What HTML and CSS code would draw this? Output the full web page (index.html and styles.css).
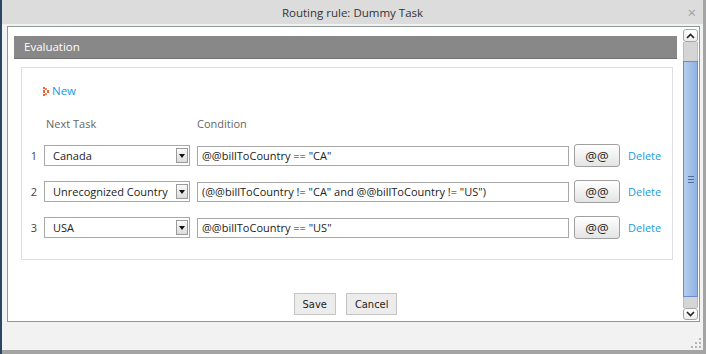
FILE: index.html
```html
<!DOCTYPE html>
<html lang="en">
<head>
    <meta charset="UTF-8">
    <title>Routing rule: Dummy Task</title>
    <link rel="stylesheet" href="styles.css">
</head>
<body>
    <div class="window">
        <div class="titlebar">
            <span></span>
            <span class="title">Routing rule: Dummy Task</span>
            <span class="close">&times;</span>
        </div>

        <div class="frame">
            <div class="content">
                <div class="section-head">Evaluation</div>

                <div class="panel">
                    <a class="new-link" href="#">
                        <svg width="6" height="9" viewBox="0 0 6 9">
                            <rect x="0" y="0" width="2" height="2" fill="#e8643c"/>
                            <rect x="0" y="3" width="2" height="3" fill="#e8643c"/>
                            <rect x="0" y="7" width="2" height="2" fill="#e8643c"/>
                            <rect x="2" y="1" width="2" height="2" fill="#f08a5a"/>
                            <rect x="2" y="6" width="2" height="2" fill="#f08a5a"/>
                            <rect x="4" y="3" width="2" height="3" fill="#e8643c"/>
                        </svg>
                        New
                    </a>

                    <div class="row head">
                        <span class="num"></span>
                        <span class="col-task">Next Task</span>
                        <span class="col-cond">Condition</span>
                    </div>

                    <div class="row">
                        <span class="num">1</span>
                        <div class="select"><span class="value">Canada</span><span class="arrow"></span></div>
                        <input class="cond" type="text" value='@@billToCountry == "CA"'>
                        <button class="at-btn">@@</button>
                        <a class="delete" href="#">Delete</a>
                    </div>

                    <div class="row">
                        <span class="num">2</span>
                        <div class="select"><span class="value">Unrecognized Country</span><span class="arrow"></span></div>
                        <input class="cond" type="text" value='(@@billToCountry != "CA" and @@billToCountry != "US")'>
                        <button class="at-btn">@@</button>
                        <a class="delete" href="#">Delete</a>
                    </div>

                    <div class="row">
                        <span class="num">3</span>
                        <div class="select"><span class="value">USA</span><span class="arrow"></span></div>
                        <input class="cond" type="text" value='@@billToCountry == "US"'>
                        <button class="at-btn">@@</button>
                        <a class="delete" href="#">Delete</a>
                    </div>
                </div>

                <div class="actions">
                    <button class="plain-btn">Save</button>
                    <button class="plain-btn">Cancel</button>
                </div>
            </div>

            <div class="scrollbar">
                <div class="sb-btn">
                    <svg width="9" height="6" viewBox="0 0 9 6"><path d="M1 5 L4.5 1.5 L8 5" fill="none" stroke="#222" stroke-width="1.6"/></svg>
                </div>
                <div class="sb-track top"></div>
                <div class="sb-thumb"><span class="grip-lines"></span></div>
                <div class="sb-track bottom"></div>
                <div class="sb-btn">
                    <svg width="9" height="6" viewBox="0 0 9 6"><path d="M1 1 L4.5 4.5 L8 1" fill="none" stroke="#222" stroke-width="1.6"/></svg>
                </div>
            </div>
        </div>

        <div class="footer">
            <svg class="resize" width="10" height="10" viewBox="0 0 10 10">
                <rect x="8" y="0" width="2" height="2" fill="#b5b5b5"/>
                <rect x="4" y="4" width="2" height="2" fill="#b5b5b5"/>
                <rect x="8" y="4" width="2" height="2" fill="#b5b5b5"/>
                <rect x="0" y="8" width="2" height="2" fill="#b5b5b5"/>
                <rect x="4" y="8" width="2" height="2" fill="#b5b5b5"/>
                <rect x="8" y="8" width="2" height="2" fill="#b5b5b5"/>
            </svg>
        </div>
    </div>
</body>
</html>
```

FILE: styles.css
```css
html, body {
    margin: 0;
    height: 354px;
    overflow: hidden;
}
body {
    font-family: "Open Sans", "Noto Sans", sans-serif;
    font-size: 11px;
    color: #333;
    background: linear-gradient(to right, #2a4664 0, #2a4664 2px, #a4a4a4 2px);
}
.window {
    width: 701px;
    height: 350px;
    margin-left: 2px;
    background-color: #f2f2f2;
    display: flex;
    flex-direction: column;
}
.titlebar {
    height: 24px;
    background-color: #dcdcdc;
    display: grid;
    grid-template-columns: 1fr auto 1fr;
    align-items: center;
}
.title {
    font-size: 11.5px;
    color: #333;
}
.close {
    justify-self: end;
    margin-right: 7px;
    font-size: 15px;
    color: #a0a0a0;
    line-height: 1;
}
.frame {
    margin: 2px 3px 0 5px;
    height: 294px;
    border: 1px solid #8f9a97;
    background-color: #fff;
    display: flex;
}
.content {
    flex: 1;
    padding: 9px 5px 0 6px;
}
.section-head {
    height: 22px;
    line-height: 22px;
    background-color: #888;
    border-bottom: 1px solid #707070;
    color: #fff;
    font-size: 11.5px;
    padding-left: 10px;
}
.panel {
    margin: 8px 4px 0 7px;
    border: 1px solid #dedede;
    padding: 15px 0 20px 0;
}
.new-link {
    display: flex;
    align-items: center;
    gap: 3px;
    margin-left: 21px;
    line-height: 16px;
    color: #1a9ce0;
    text-decoration: none;
    font-size: 11.5px;
}
.row {
    display: flex;
    align-items: center;
    height: 23px;
    margin-top: 13px;
}
.row.head {
    height: 16px;
    margin-top: 16px;
    color: #666;
    font-size: 11px;
}
.num {
    width: 15px;
    text-align: right;
    font-size: 11px;
    color: #444;
}
.col-task {
    margin-left: 9px;
    width: 151px;
}
.select {
    margin-left: 7px;
    width: 146px;
    height: 21px;
    box-sizing: border-box;
    border: 1px solid #a8a8a8;
    display: flex;
    align-items: center;
    justify-content: space-between;
    background-color: #fff;
}
.select .value {
    padding-left: 8px;
    font-size: 11px;
    color: #222;
    white-space: nowrap;
}
.select .arrow {
    width: 12px;
    height: 15px;
    margin-right: 1px;
    box-sizing: border-box;
    border: 1px solid #9a9a9a;
    background: linear-gradient(#fafafa, #dcdcdc);
    position: relative;
}
.select .arrow::after {
    content: "";
    position: absolute;
    left: 2px;
    top: 5px;
    border-left: 3px solid transparent;
    border-right: 3px solid transparent;
    border-top: 4px solid #111;
}
.cond {
    margin-left: 7px;
    width: 372px;
    height: 20px;
    box-sizing: border-box;
    border: 1px solid #a8a8a8;
    padding: 0 4px;
    font-family: "Open Sans", "Noto Sans", sans-serif;
    font-size: 11px;
    color: #222;
    outline: none;
}
.at-btn {
    margin-left: 5px;
    width: 46px;
    height: 23px;
    box-sizing: border-box;
    border: 1px solid #a0a0a0;
    border-radius: 3px;
    background: linear-gradient(#ffffff, #e4e4e4);
    font-family: "Open Sans", "Noto Sans", sans-serif;
    font-size: 13px;
    color: #222;
    padding: 0;
}
.delete {
    margin-left: 8px;
    color: #1a9ce0;
    text-decoration: none;
    font-size: 11px;
}
.actions {
    display: flex;
    justify-content: center;
    gap: 10px;
    margin-top: 33px;
}
.plain-btn {
    height: 22px;
    box-sizing: border-box;
    padding: 0 8px;
    border: 1px solid #c4c4c4;
    background-color: #ececec;
    font-family: "DejaVu Sans", sans-serif;
    font-stretch: condensed;
    font-size: 11px;
    color: #222;
}
.scrollbar {
    width: 15px;
    margin: 2px 1px 1px 1px;
    display: flex;
    flex-direction: column;
}
.sb-btn {
    height: 13px;
    box-sizing: border-box;
    border: 1px solid #a5a5a5;
    border-radius: 3px;
    background: linear-gradient(#ffffff, #ececec);
    display: flex;
    align-items: center;
    justify-content: center;
}
.sb-btn:last-child {
    height: 12px;
}
.sb-track {
    background-color: #d5d5d5;
    border-left: 1px solid #bdbdbd;
    border-right: 1px solid #bdbdbd;
}
.sb-track.top {
    height: 19px;
}
.sb-track.bottom {
    height: 11px;
}
.sb-thumb {
    height: 236px;
    box-sizing: border-box;
    border: 1px solid #6a8ec8;
    background: linear-gradient(to right, #b5cdef, #8fb2e4);
    display: flex;
    align-items: center;
    justify-content: center;
}
.grip-lines {
    width: 6px;
    height: 7px;
    background: linear-gradient(#4f6f9f 0 1px, transparent 1px 3px, #4f6f9f 3px 4px, transparent 4px 6px, #4f6f9f 6px 7px);
}
.footer {
    flex: 1;
    display: flex;
    justify-content: flex-end;
    align-items: flex-end;
    padding: 0 2px 2px 0;
}
```
